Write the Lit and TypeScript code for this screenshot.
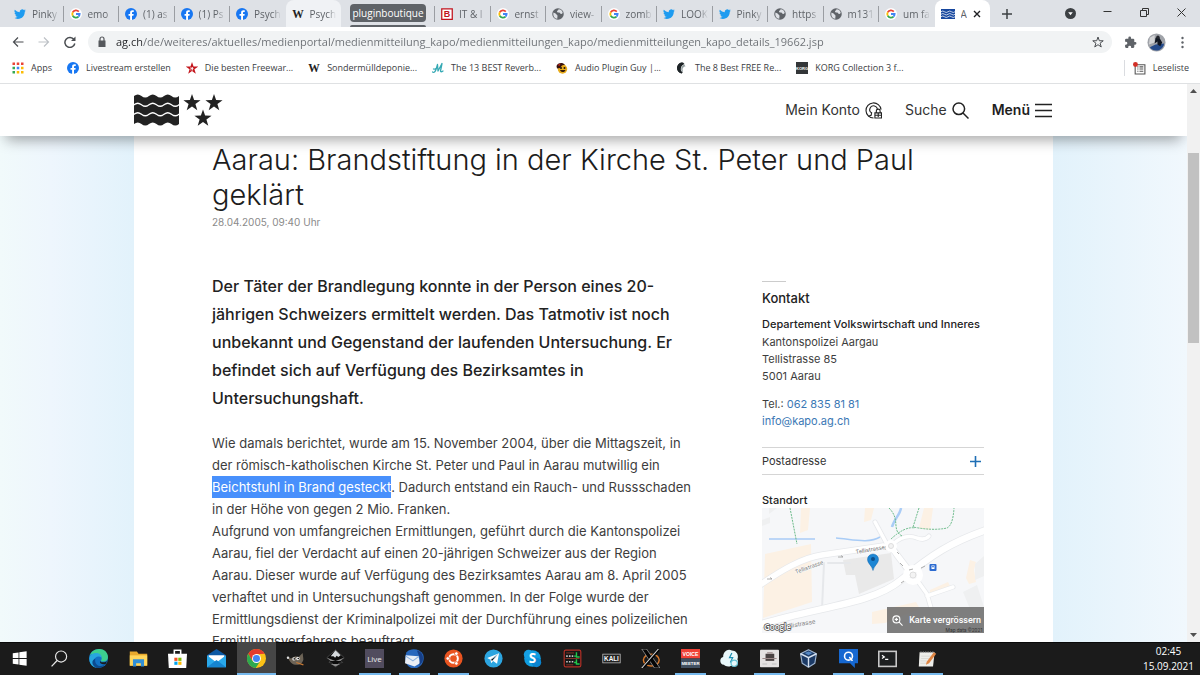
import { LitElement, html, css, svg, nothing, type TemplateResult } from "lit";
import { customElement } from "lit/decorators.js";
import { classMap } from "lit/directives/class-map.js";

const pic = (viewBox: string, body: TemplateResult) =>
  html`<svg class="pic" viewBox=${viewBox} aria-hidden="true">${body}</svg>`;

const starPoints = (cx: number, cy: number, r: number) =>
  Array.from({ length: 10 }, (_, i) => {
    const a = -Math.PI / 2 + (i * Math.PI) / 5;
    const d = i % 2 ? r * 0.4 : r;
    return `${(cx + d * Math.cos(a)).toFixed(2)},${(cy + d * Math.sin(a)).toFixed(2)}`;
  }).join(" ");

const wave = (y: number, h: number, w: number, step: number, amp: number) => {
  let d = `M0 ${y}`;
  const n = Math.round(w / step);
  for (let i = 0; i < n; i++) d += `q${step / 2} ${i % 2 ? amp : -amp} ${step} 0`;
  d += `v${h}`;
  for (let i = n - 1; i >= 0; i--) d += `q${-step / 2} ${i % 2 ? amp : -amp} ${-step} 0`;
  return d + "z";
};

const twitter = pic("0 0 24 24", svg`<path fill="#1d9bf0" d="M23.6 4.9a9.6 9.6 0 0 1-2.8.8 4.8 4.8 0 0 0 2.1-2.7 9.700 9.700 0 0 1-3.1 1.200 4.900 4.900 0 0 0-8.300 4.400A13.800 13.800 0 0 1 1.700 3.500a4.900 4.900 0 0 0 1.500 6.500 4.800 4.800 0 0 1-2.200-.6 4.900 4.900 0 0 0 3.900 4.800 4.900 4.900 0 0 1-2.200.1 4.900 4.900 0 0 0 4.500 3.400A9.800 9.800 0 0 1 0 19.700a13.800 13.800 0 0 0 7.500 2.200c9.100 0 14-7.500 14-14v-.6a9.900 9.900 0 0 0 2.100-2.400z"/>`);
const google = pic("0 0 24 24", svg`<circle cx="12" cy="12" r="12" fill="#fff"/><g fill="none" stroke-width="3.600"><path stroke="#ea4335" d="M17.600 7.200A7.500 7.500 0 0 0 5.500 8.500"/><path stroke="#fbbc05" d="M5.500 8.500a7.500 7.500 0 0 0 0 7"/><path stroke="#34a853" d="M5.500 15.500a7.500 7.500 0 0 0 11.500 1.800"/><path stroke="#4285f4" d="M12 12h7.300a7.500 7.500 0 0 1-2.300 5.300"/></g>`);
const facebook = pic("0 0 24 24", svg`<circle cx="12" cy="12" r="12" fill="#1877f2"/><path fill="#fff" d="M10.200 24v-8.500H7.100V12h3.100V9.400c0-3 1.800-4.700 4.600-4.700 1.300 0 2.700.2 2.700.2v3h-1.500c-1.500 0-2 .9-2 1.900V12h3.400l-.6 3.500H14V24z"/>`);
const wikipedia = pic("0 0 24 24", svg`<text x="12" y="20" text-anchor="middle" font-family="Liberation Serif, serif" font-weight="700" font-size="23" fill="#222">W</text>`);
const boxB = pic("0 0 24 24", svg`<path fill="#fff" stroke="#c1121c" stroke-width="2.500" d="M1.500 1.500h21v21h-21z"/><text x="12" y="18.500" text-anchor="middle" font-family="Liberation Sans, sans-serif" font-weight="700" font-size="18" fill="#c1121c">B</text>`);
const globe = pic("0 0 24 24", svg`<circle cx="12" cy="12" r="11.500" fill="#5f6368"/><path fill="#dee1e6" d="M3 9c3 2 4 1 5 3s3 1 3 4-1 4 0 5.500C6 21.500 2.500 17.500 2.500 12zM13 2.500c0 3-3 2-3 4.500s3 2 4.500 2 1.500 3 4 3 1.500-2 3-2C21 5.500 17.500 2.700 13 2.500z"/>`);
const aargau = pic("0 0 28 20", svg`<path fill="#17479e" d="M0 0h28v20H0z"/><path fill="none" stroke="#fff" stroke-width="1.500" d="M0 5.500q3.500-3 7 0t7 0 7 0 7 0M0 10.500q3.500-3 7 0t7 0 7 0 7 0M0 15.500q3.500-3 7 0t7 0 7 0 7 0"/>`);

interface Tab { icon: TemplateResult; title: string; state?: "hover" | "active" }
const leftTabs: Tab[] = [
  { icon: twitter, title: "Pinky" },
  { icon: google, title: "emo" },
  { icon: facebook, title: "(1) as" },
  { icon: facebook, title: "(1) Ps" },
  { icon: facebook, title: "Psych" },
  { icon: wikipedia, title: "Psych", state: "hover" },
];
const rightTabs: Tab[] = [
  { icon: boxB, title: "IT & I" },
  { icon: google, title: "ernst" },
  { icon: globe, title: "view-" },
  { icon: google, title: "zomb" },
  { icon: twitter, title: "LOOK" },
  { icon: twitter, title: "Pinky" },
  { icon: globe, title: "https" },
  { icon: globe, title: "m131" },
  { icon: google, title: "um fa" },
  { icon: aargau, title: "A", state: "active" },
];

const bookmarks = [
  { title: "Apps", icon: pic("0 0 24 24", svg`${[0, 1, 2].map((r) => [0, 1, 2].map((c) => svg`<rect x=${1 + c * 8.500} y=${1 + r * 8.500} width="5" height="5" fill=${["#ea4335", "#ea4335", "#ea4335", "#34a853", "#4285f4", "#fbbc05", "#34a853", "#fbbc05", "#fbbc05"][r * 3 + c]}/>`))}`) },
  { title: "Livestream erstellen", icon: facebook },
  { title: "Die besten Freewar...", icon: pic("0 0 24 24", svg`<polygon fill="#c4161c" points=${starPoints(12, 13, 13)}/><path stroke="#fff" stroke-width="1.500" d="M10 10v7M13 10v7M10 13h5"/>`) },
  { title: "Sondermülldeponie...", icon: wikipedia },
  { title: "The 13 BEST Reverb...", icon: pic("0 0 24 24", svg`<path fill="none" stroke="#35a9b4" stroke-width="2.600" stroke-linecap="round" stroke-linejoin="round" d="M1 20c5 3 7-4 10-15l1 13L20 3l-3 15c0 2 2 2 5 0M3 14c3 1 6-1 7-4"/>`) },
  { title: "Audio Plugin Guy |...", icon: pic("0 0 24 24", svg`<circle cx="13" cy="14" r="9.500" fill="#e8ac1b"/><path fill="#35110f" d="M1 8c2-7 12-8 17-3l-6 2-4 5-6 1z"/><path fill="#c3271b" d="M3 6l6-3-2 5z"/><circle cx="10" cy="12" r="2" fill="#201010"/><circle cx="17" cy="12" r="2" fill="#201010"/><path fill="#33190b" d="M8 16h11c-1 5-9 6-11 0z"/>`) },
  { title: "The 8 Best FREE Re...", icon: pic("0 0 24 24", svg`<path fill="#1e2427" d="M14 1A11 11 0 0 0 12 23c-4-5-4-16 5-19z"/><path fill="#1e2427" d="M12 1C0 2-1 20 11 23l3-3C6 17 7 8 15 4z"/><path fill="#98a3a5" d="M17 5c-7 2-8 9-5 15l2-2c-2-4 0-9 5-9z"/>`) },
  { title: "KORG Collection 3 f...", icon: pic("0 0 24 24", svg`<path fill="#333638" d="M0 0h24v24H0z"/><text x="12" y="15" text-anchor="middle" font-family="Liberation Sans, sans-serif" font-weight="700" font-size="8" fill="#fff">KORG</text>`) },
];

const disc = (fill: string, body: TemplateResult) => svg`<circle cx="12" cy="12" r="11.500" fill=${fill}/>${body}`;
interface App { name: string; icon: TemplateResult; open?: boolean; front?: boolean }
const apps: App[] = [
  { name: "Start", icon: svg`<path fill="#fff" d="M3.500 5.300l7.300-1v7.200H3.500zM11.800 4.200l9.200-1.300v8.600h-9.200zM3.500 12.500h7.300v7.200l-7.300-1zM11.800 12.500H21v8.600l-9.200-1.300z"/>` },
  { name: "Suche", icon: svg`<circle cx="14" cy="9.500" r="7" fill="none" stroke="#e8e8e8" stroke-width="1.500"/><path stroke="#e8e8e8" stroke-width="1.500" d="M9 14.500L2 22"/>` },
  { name: "Edge", icon: svg`<circle cx="12" cy="12" r="12" fill="#1272c4"/><path fill="#3ccf8e" d="M1 8C5-3 23-3 24 10c0 5-5 7-9 5 3-5-1-10-8-9-3 0-5 1-6 2z"/><path fill="#28a7de" d="M1 9c4-6 15-5 15 2-4-3-9-1-10 4-1 3 1 7 4 9C3 23-1 16 1 9z"/><path fill="#0c4b8f" d="M8 12c-2 9 7 12 13 7-4 5-9 6-13 4-5-3-5-9 0-11z"/><path fill="#1b1b1b" d="M14 15c2 3 7 2 9 0l-2 4c-4 1-8-1-7-4z"/>` },
  { name: "Explorer", icon: svg`<path fill="#e8a92c" d="M1 3h9l2 3h11v15H1z"/><path fill="#ffd65c" d="M1 8h22v13H1z"/><path fill="#318fd6" d="M5 13h14v9h-4v-4H9v4H5z"/>` },
  { name: "Store", icon: svg`<path fill="none" stroke="#fff" stroke-width="2" d="M8 7V1.500h8V7"/><path fill="#fff" d="M0 6h24l-1 18H1z"/><path fill="#f25022" d="M8 11h4v4H8z"/><path fill="#7fba00" d="M13 11h4v4h-4z"/><path fill="#00a4ef" d="M8 16h4v4H8z"/><path fill="#ffb900" d="M13 16h4v4h-4z"/>` },
  { name: "Mail", icon: svg`<path fill="#0c59a4" d="M0 8l12-8 12 8v5H0z"/><path fill="#fff" d="M2 8h20v6l-10 4L2 14z"/><path fill="#29a8ea" d="M0 8l12 9 12-9v15H0z"/><path fill="#1684cf" d="M0 23l12-9 12 9z"/>` },
  { name: "Chrome", front: true, icon: svg`<circle cx="12" cy="12" r="12" fill="#fbc116"/><path fill="#e33b2e" d="M1.600 6A12 12 0 0 1 22.400 6L12 6.600 6.800 15z"/><path fill="#2da94f" d="M1.600 6A12 12 0 0 0 11 24l5.800-9L12 17.400 6.800 15z"/><circle cx="12" cy="12" r="5.600" fill="#fff"/><circle cx="12" cy="12" r="4.400" fill="#4285f4"/>` },
  { name: "GIMP", icon: svg`<path fill="#6d6457" d="M2 9l4 3 6-3 4 1 5-5 1 8c-1 5-4 7-8 7-6 0-10-4-12-11z"/><circle cx="10" cy="12.500" r="2" fill="#eee"/><circle cx="15" cy="12" r="2.200" fill="#eee"/><circle cx="10.500" cy="12.500" r="1" fill="#111"/><circle cx="15.500" cy="12" r="1" fill="#111"/><circle cx="2.500" cy="11" r="1.500" fill="#ddd"/><path stroke="#c87a35" stroke-width="1.500" d="M13 17l9 3"/>` },
  { name: "Inkscape", icon: svg`<path fill="#0c0c0c" stroke="#666" stroke-width=".7" d="M12 1l11 10-5 3 3 3-5 1-4 5-4-5-4-1 2-3-5-3z"/><path fill="#d5d9dc" d="M12 1.500l6.500 6.500-3 2-2-1.500-2 2.500-2-2-3.500 0z"/><path fill="#8c8c8c" d="M1 11l11 4 11-4-5 4H6zM6 19h12l-6 3z"/>` },
  { name: "Live", open: true, icon: svg`<path fill="#514c5e" d="M0 0h24v24H0z"/><text x="12" y="16" text-anchor="middle" font-family="Open Sans, sans-serif" font-size="10" fill="#eee">Live</text>` },
  { name: "Thunderbird", open: true, icon: svg`<path fill="#2868bd" d="M2 4C8-2 19 0 23 7c2 7-1 14-8 17H8C-1 20-1 10 2 4z"/><path fill="#e9eef5" d="M1 8l16 1 2 9-7 4-12-4z"/><path fill="none" stroke="#8db1dc" stroke-width="1.500" d="M1 9l9 6 8-6"/><path fill="#173f87" d="M15 2c7 1 9 9 7 14l-4 5 1-9z"/>` },
  { name: "Ubuntu", open: true, icon: disc("#e95420", svg`<circle cx="12" cy="12" r="5.500" fill="none" stroke="#fff" stroke-width="2.500"/><g fill="#fff" stroke="#e95420"><circle cx="4.800" cy="12" r="2.300"/><circle cx="15.600" cy="5.800" r="2.300"/><circle cx="15.600" cy="18.200" r="2.300"/></g>`) },
  { name: "Telegram", icon: disc("#2ca5e0", svg`<path fill="#fff" d="M4 11.500L19 5.500l-2.500 13-5-3.500-2.500 3-.8-4.500z"/><path stroke="#a9cfe7" d="M8.500 13.500L17 7l-6.500 8"/>`) },
  { name: "Skype", icon: svg`<circle cx="12" cy="12" r="10.500" fill="#0f9de0"/><circle cx="7" cy="7" r="6" fill="#159fe3"/><circle cx="17" cy="17" r="6" fill="#0a84d0"/><text x="12" y="18" text-anchor="middle" font-family="Open Sans, sans-serif" font-weight="700" font-size="17" fill="#fff">S</text>` },
  { name: "Mixer", icon: svg`<rect x="1.500" y="1.500" width="21" height="21" rx="2" fill="#171717" stroke="#b33027" stroke-width="1.500"/><path stroke="#c8c8c8" stroke-width="2" stroke-dasharray="2 1.500" d="M4 9h10M4 16h10"/><path fill="none" stroke="#22c84b" stroke-width="1.800" d="M17 4v6h4M17 13v6h4M14 9h3M14 17h3"/><path stroke="#a03a2c" d="M4 5h10M3 12h18M4 20h9"/>` },
  { name: "KALI", icon: svg`<rect x="1" y="6.500" width="22" height="11" fill="#222" stroke="#bbb" stroke-width="1"/><text x="12" y="15" text-anchor="middle" font-family="Liberation Sans, sans-serif" font-weight="700" font-size="8" fill="#fff">KALI</text>` },
  { name: "XServer", icon: svg`<ellipse cx="13" cy="14" rx="10" ry="7.500" fill="none" stroke="#d8782a" stroke-width="1.800"/><path fill="#050505" stroke="#bbb" stroke-width=".8" d="M1 0h6l17 24h-7z"/><path stroke="#050505" stroke-width="4" d="M22 1L3 23"/><path stroke="#ddd" stroke-width="1.300" d="M22 0L1 24"/>` },
  { name: "Voicemeeter", open: true, icon: svg`<path fill="#ef4136" d="M0 0h24v12H0z"/><path fill="#415061" d="M0 12h24v12H0z"/><g font-family="Liberation Sans, sans-serif" font-weight="700" fill="#fff" text-anchor="middle" font-size="6.500"><text x="12" y="8.800">VOICE</text><text x="12" y="20.500" font-size="5.500">MEETER</text></g>` },
  { name: "Cloud", icon: svg`<path fill="#e9f8fb" d="M5 20C-1 19-1 11 4 10 4 3 10-1 15 2c6 0 9 6 7 11 3 6-3 11-8 8-3 2-7 1-9-1z"/><path fill="none" stroke="#198db0" stroke-width="1.500" d="M15 5l-3 6h4l-3 6"/><circle cx="18" cy="18" r="4" fill="none" stroke="#68c3d4" stroke-width="1.500"/>` },
  { name: "Chip", open: true, icon: svg`<rect x="0" y="1" width="24" height="22" rx="1" fill="#e4e2e2"/><rect x="7" y="6" width="11" height="9" fill="#4a4343"/><path stroke="#9b8a8a" stroke-width="1.500" d="M3 12h18M9 5h7"/><path stroke="#ccc" stroke-width="2" d="M3 19h6M15 19h6"/>` },
  { name: "VirtualBox", icon: svg`<path fill="#1c3a65" stroke="#9fb6d2" stroke-width="1.500" stroke-linejoin="round" d="M12 1l10 5-2 12-8 5-8-5L2 6z"/><path fill="none" stroke="#d6e1ef" stroke-width="1.800" d="M2 6l10 5 10-5M12 11v12"/><path fill="#5487c4" d="M7 5l5-2 5 2-5 3z"/>` },
  { name: "Quick Assist", open: true, icon: svg`<path fill="#1668d1" d="M0 0h24v18h-4v6l-6-6H0z"/><circle cx="12" cy="9" r="5" fill="none" stroke="#fff" stroke-width="2"/><path stroke="#fff" stroke-width="2" d="M13 10l4 5"/>` },
  { name: "Terminal", open: true, icon: svg`<rect x="1" y="3" width="22" height="19" fill="#1d1f20" stroke="#c8c8c8" stroke-width="2"/><path fill="none" stroke="#fff" stroke-width="1.500" d="M5 8l3 2-3 2M9 13h4"/>` },
  { name: "Editor", open: true, icon: svg`<path fill="#eeeeea" d="M2 4h19l-2 18H1z"/><path stroke="#d5d5d0" d="M4 9h12M4 12h10M3 15h8M3 18h8"/><path stroke="#999" stroke-width="2" stroke-dasharray="1.500 1.500" d="M3 4h18"/><path fill="#df8543" d="M20 4l3 2-9 12-4 2 1-4z"/>` },
];

@customElement("browser-chrome")
class BrowserChrome extends LitElement {
  static styles = css`
    :host { display: block; font-family: "Open Sans", sans-serif; color: #3c4043; }
    button { border: 0; padding: 0; background: none; font: inherit; color: inherit; display: grid; place-items: center; }
    a { color: inherit; text-decoration: none; }
    .strip { display: flex; height: 27px; background: #dee1e6; }
    .tabs { flex: 1; display: flex; padding-left: 8px; min-width: 0; }
    .tab { flex: 1 1 0; min-width: 0; display: flex; align-items: center; gap: 6px; padding: 0 2px 0 6px; font-size: 10px; color: #5f6368; box-sizing: border-box; position: relative; }
    .tab .pic { width: 12px; height: 12px; flex: none; }
    .label { flex: 1; text-align: left; overflow: hidden; white-space: nowrap; line-height: 16px; mask-image: linear-gradient(90deg, #000 60%, transparent 90%); }
    .sep::after, .group::after { content: ""; position: absolute; right: 0; top: 6px; width: 1px; height: 16px; background: #9a9da2; }
    .hover { background: #f0f2f5; border-radius: 8px 8px 0 0; }
    .active { background: #fff; border-radius: 8px 8px 0 0; }
    .active .pic { width: 14px; height: 10px; }
    .active .label { mask-image: none; flex: none; }
    .active .x { width: 8px; height: 8px; margin: 0 7px 0 auto; }
    .group { width: 94px; display: flex; flex-direction: column; justify-content: flex-end; align-items: center; position: relative; }
    .chip { background: #5f6368; color: #fff; border-radius: 4px; font-size: 10px; line-height: 18px; height: 18px; width: 76px; text-align: center; }
    .under { width: 76px; height: 2px; margin-top: 3px; background: #5f6368; border-radius: 2px 2px 0 0; }
    .controls { width: 210px; display: flex; align-items: center; justify-content: space-between; padding: 0 13px 0 10px; box-sizing: border-box; }
    .win { display: flex; align-items: center; gap: 26px; }
    .win .pic { width: 11px; height: 11px; }
    .win .arrow { width: 12px; height: 12px; }
    .plus .pic { width: 14px; height: 14px; }
    .bar { display: flex; align-items: center; height: 30px; background: #fff; padding: 0 11px 0 12px; }
    .nav { display: flex; gap: 14px; }
    .nav .pic { width: 12px; height: 12px; }
    .omni { flex: 1; display: flex; align-items: center; height: 22px; margin: 0 12px; padding: 0 8px; border-radius: 11px; background: #f1f3f4; gap: 8px; }
    .omni .pic { width: 12px; height: 12px; }
    .url { flex: 1; min-width: 0; border: 0; padding: 0; outline: 0; font: 11px/20px "Open Sans", sans-serif; color: transparent; background: linear-gradient(90deg, #202124 26px, #6a6e73 26px); -webkit-background-clip: text; background-clip: text; }
    .tools { display: flex; align-items: center; gap: 10px; }
    .tools .pic { width: 13px; height: 13px; }
    .tools .face .pic { width: 19px; height: 19px; }
    .marks { display: flex; align-items: center; justify-content: space-between; height: 27px; box-sizing: border-box; background: #fff; border-bottom: 1px solid #dfe1e3; padding: 0 11px 4px 12px; font-size: 9px; line-height: 16px; }
    .list { display: flex; gap: 15px; }
    .mark { display: flex; align-items: center; gap: 7px; white-space: nowrap; }
    .mark .pic { width: 12px; height: 12px; }
    .reading { display: flex; align-items: center; gap: 7px; border-left: 1px solid #dadce0; padding-left: 8px; }
    .reading .pic { width: 13px; height: 13px; }
  `;
  tab(t: Tab, next?: Tab) {
    const active = t.state === "active";
    return html`<button class=${classMap({ tab: true, active, hover: t.state === "hover", sep: !t.state && !next?.state })}>
      ${t.icon}<span class="label">${t.title}</span>
      ${active ? html`<svg class="x" viewBox="0 0 8 8"><path d="M1 1l6 6M7 1L1 7" stroke="#202124" stroke-width="1.400"/></svg>` : nothing}
    </button>`;
  }
  render() {
    return html`
      <div class="strip">
        <div class="tabs">
          ${leftTabs.map((t, i) => this.tab(t, leftTabs[i + 1]))}
          <div class="group"><button class="chip">pluginboutique</button><div class="under"></div></div>
          ${rightTabs.map((t, i) => this.tab(t, rightTabs[i + 1]))}
        </div>
        <div class="controls">
          <button class="plus" aria-label="Neuer Tab">${pic("0 0 14 14", svg`<path d="M7 2v10M2 7h10" stroke="#3c4043" stroke-width="1.500"/>`)}</button>
          <div class="win">
            <button class="arrow" aria-label="Tabs suchen">${pic("0 0 12 12", svg`<circle cx="6" cy="6" r="6" fill="#3c4043"/><path fill="#fff" d="M3.500 4.500h5L6 8z"/>`)}</button>
            <button aria-label="Minimieren">${pic("0 0 11 11", svg`<path d="M1.500 3.500h8" stroke="#333"/>`)}</button>
            <button aria-label="Verkleinern">${pic("0 0 11 11", svg`<path fill="none" stroke="#333" d="M1.500 2.500h6v6h-6zM3.500 2V.5h6v6H8"/>`)}</button>
            <button aria-label="Schliessen">${pic("0 0 11 11", svg`<path d="M1.500 .5l8 8M9.500 .5l-8 8" stroke="#333"/>`)}</button>
          </div>
        </div>
      </div>
      <div class="bar">
        <div class="nav">
          <button aria-label="Zurück">${pic("0 0 12 12", svg`<path fill="none" stroke="#4a4d51" stroke-width="1.200" d="M11.500 6H1.500M6 1.500L1.500 6 6 10.500"/>`)}</button>
          <button aria-label="Vorwärts">${pic("0 0 12 12", svg`<path fill="none" stroke="#bdc1c6" stroke-width="1.200" d="M.5 6h10M6 1.500L10.500 6 6 10.500"/>`)}</button>
          <button aria-label="Neu laden">${pic("0 0 12 12", svg`<path fill="none" stroke="#4a4d51" stroke-width="1.500" d="M10 3.500A5 5 0 1 0 10.800 7.500"/><path fill="#4a4d51" d="M11.500.5v4.500H7z"/>`)}</button>
        </div>
        <div class="omni">
          ${pic("0 0 12 12", svg`<path fill="#55585c" d="M2.500 4.500h7V11h-7z"/><path fill="none" stroke="#55585c" stroke-width="1.200" d="M4 5V3a2 2 0 0 1 4 0v2"/>`)}
          <input class="url" aria-label="Adresse" .value=${"ag.ch/de/weiteres/aktuelles/medienportal/medienmitteilung_kapo/medienmitteilungen_kapo/medienmitteilungen_kapo_details_19662.jsp"} />
          <button aria-label="Lesezeichen">${pic("0 0 24 24", svg`<polygon fill="none" stroke="#4a4d51" stroke-width="2" points=${starPoints(12, 13, 11)}/>`)}</button>
        </div>
        <div class="tools">
          <button aria-label="Erweiterungen">${pic("0 0 24 24", svg`<path fill="#5f6368" d="M20.500 11H19V7a2 2 0 0 0-2-2h-4V3.500a2.500 2.500 0 0 0-5 0V5H4a2 2 0 0 0-2 2v3.800h1.500a2.700 2.700 0 0 1 0 5.400H2V20c0 1.100.9 2 2 2h3.800v-1.500a2.700 2.700 0 0 1 5.400 0V22H17a2 2 0 0 0 2-2v-4h1.500a2.500 2.500 0 0 0 0-5z"/>`)}</button>
          <button class="face" aria-label="Profil">${pic("0 0 20 20", svg`<circle cx="10" cy="10" r="9.500" fill="#a0a3a9"/><path fill="#d3d4d6" d="M3 5l5-3v8l-6 2z"/><path fill="#244a8a" d="M3 15l6-3 9-1c-1 8-11 10-15 4z"/><path fill="#111722" d="M9 5l4 0 3 5-2 4-3-2 0-3-3 2z"/><circle cx="11.500" cy="4.500" r="1.800" fill="#22252b"/>`)}</button>
          <button aria-label="Menü">${pic("0 0 13 13", svg`<g fill="#5f6368"><circle cx="6.500" cy="2" r="1.200"/><circle cx="6.500" cy="6.500" r="1.200"/><circle cx="6.500" cy="11" r="1.200"/></g>`)}</button>
        </div>
      </div>
      <div class="marks">
        <div class="list">${bookmarks.map((b) => html`<a class="mark" href="#">${b.icon}<span>${b.title}</span></a>`)}</div>
        <button class="reading">${pic("0 0 24 24", svg`<path fill="none" stroke="#555" stroke-width="2" d="M4 5h18v17H4z"/><path stroke="#555" stroke-width="2" d="M8 9h2M12 9h7M8 13h2M12 13h7M8 17h2M12 17h7"/><circle cx="4.500" cy="4.500" r="4.500" fill="#d22f27"/>`)}<span>Leseliste</span></button>
      </div>`;
  }
}

@customElement("site-map")
class SiteMap extends LitElement {
  static styles = css`
    :host { display: block; position: relative; }
    .map { display: block; width: 100%; height: auto; }
    .zoom { position: absolute; right: 0; bottom: 0; display: flex; align-items: center; gap: 6px; height: 26px; padding: 0 3px 0 5px; border: 0; background: rgba(105, 105, 105, 0.85); color: #fff; font: 500 9px/14px Roboto, sans-serif; white-space: nowrap; }
    .zoom svg { width: 11px; height: 11px; }
    .credit { position: absolute; right: 1px; bottom: 0; font: 5px/6px Roboto, sans-serif; color: #333; }
  `;
  render() {
    return html`<svg class="map" viewBox="0 0 222 125" role="img" aria-label="Karte Tellistrasse 85">
        <path fill="#f6f7f9" d="M0 0h222v125H0z"/>
        <g fill="#fcf1e4"><path d="M3 46l46-10 1 58-49 16z"/><path d="M39 0h9l-2 22-8 3z"/><path d="M103 0h9l-3 12-7 2z"/><path d="M162 0h9l-3 22-11-2z"/><path d="M208 52l6 2-2 8 2 12-7 2-3-6z"/><path d="M110 104l44-10 4 7-35 14-13 1z"/><path d="M168 82l18-8 2 4-20 8z"/></g>
        <g fill="#eff0f1"><path d="M7 6l8-6h-8z"/><path d="M0 12l8-3v6l-8 3z"/><path d="M201 84l14-7 7 22-14 2z"/><path d="M213 56l9-8v20l-9 4z"/></g>
        <path fill="#e9e9e9" d="M81 52l48-7 3 26-35 15-4-19-9 0z"/>
        <g fill="none" stroke="#e6e8eb" stroke-linecap="round">
          <path stroke-width="8" d="M-4 118L0 116C60 98 110 96 139 72c30-25 50-38 88-51"/>
          <path stroke-width="7" d="M-2 77C20 62 40 50 60 47l61-9q9 0 14 9l13 17"/>
          <path stroke-width="5" d="M113 14l14 26M131 36q12-11 24-6 8 3 12-2M155 72l10 14 4 14M165 88l26-9"/>
          <path stroke-width="2" d="M62 55l-2 46M66 55h22"/>
        </g>
        <g fill="none" stroke="#fff" stroke-linecap="round">
          <path stroke-width="6.500" d="M-4 118L0 116C60 98 110 96 139 72c30-25 50-38 88-51"/>
          <path stroke-width="5.500" d="M-2 77C20 62 40 50 60 47l61-9q9 0 14 9l13 17"/>
          <path stroke-width="3.500" d="M113 14l14 26M131 36q12-11 24-6 8 3 12-2M155 72l10 14 4 14M165 88l26-9"/>
          <circle cx="151" cy="67" r="7" stroke-width="6"/><circle cx="129" cy="38" r="4" stroke-width="4"/>
        </g>
        <circle cx="151" cy="67" r="3" fill="#f3f3f3" stroke="#dedede"/><circle cx="129" cy="38" r="2.500" fill="#f3f3f3" stroke="#dedede"/>
        <g fill="none" stroke="#a9ccf6" stroke-width="1.500"><path d="M7 31h46M74 30c15 1 33 6 44-1"/><path stroke-width="2.500" d="M139 0c-1 7-7 11-9 19"/></g>
        <g fill="none" stroke="#69ba88" stroke-width="1" stroke-dasharray="2 1"><path d="M28 0l7 36M127 0c12 12 2 22 13 28M157 0l-6 19q20 4 34 1 6-3 7-20M129 31q14-13 24-11"/></g>
        <g fill="none" stroke="#999" stroke-width="0.800"><path d="M5 71h5l-2-1.500M76 49h5l-2-1.500M147 62l4-1M159 60l4-2M138 55l3 3M139 75l3-2M135 44l2 2M123 38v4"/></g>
        <g font-family="Roboto, sans-serif" font-size="5.800" fill="#777" stroke="#fff" stroke-width="1" paint-order="stroke"><text transform="translate(34 66) rotate(-20)">Tellistrasse</text><text transform="translate(94 46) rotate(-10)">Tellistrasse</text></g>
        <text transform="translate(28 120) rotate(-10)" font-family="Roboto, sans-serif" font-size="6.500" fill="#888">llistrasse</text>
        <rect x="167.500" y="56" width="7" height="7" rx="1" fill="#2c6bd0"/><path fill="#fff" d="M169.500 57.500h3v3.500h-3z"/><path fill="#2c6bd0" d="M170 58.200h2v1h-2z"/>
        <path fill="#1d86d4" stroke="#1568ae" stroke-width="0.500" d="M111 62.500c-1-5-5.500-7-5.500-11a5.500 5.500 0 0 1 11 0c0 4-4.500 6-5.500 11z"/><circle cx="111" cy="51" r="2" fill="#0d4f8a"/>
        <text x="2" y="122" font-family="Open Sans, sans-serif" font-weight="600" font-size="8" fill="#fff" stroke="#555" stroke-width="1.500" paint-order="stroke">Google</text>
      </svg>
      <button class="zoom"><svg viewBox="0 0 12 12"><g fill="none" stroke="#fff" stroke-width="1.200"><circle cx="4.800" cy="4.800" r="3.800"/><path d="M7.600 7.600L11.500 11.500M3 4.800h3.600M4.800 3v3.600"/></g></svg>Karte vergrössern</button>
      <span class="credit">Map data ©2021</span>`;
  }
}

@customElement("news-page")
class NewsPage extends LitElement {
  static styles = css`
    :host { display: flex; min-height: 0; overflow: hidden; font-family: Inter, sans-serif; color: #3d3d3d; }
    .view { flex: 1; min-width: 0; display: flex; flex-direction: column; overflow: hidden; background: linear-gradient(90deg, #f1fafb 0, #eef6fd 50px, #e2f2fb 134px, #e2f2fb calc(100% - 134px), #f1f8fd 100%); }
    .head { position: relative; z-index: 1; flex: none; background: #fff; box-shadow: 0 10px 14px -6px rgba(0, 0, 0, 0.35); }
    .inner { max-width: 919px; height: 52px; margin: 0 auto; display: flex; justify-content: space-between; align-items: center; }
    .logo { display: block; width: 90px; height: 34px; }
    .menu { display: flex; gap: 23px; padding-right: 1px; font-weight: 400; font-size: 14px; line-height: 20px; }
    .item { display: flex; align-items: center; gap: 5px; border: 0; padding: 0; background: none; font: inherit; color: #333; text-decoration: none; white-space: nowrap; }
    .item svg { width: 17px; height: 17px; }
    .strong { font-weight: 600; color: #1f1f1f; }
    .sheet { flex: 1; width: 100%; max-width: 919px; min-height: 0; margin: 0 auto; box-sizing: border-box; background: #fff; padding: 6px 69px 0 78px; overflow: hidden; }
    h1 { margin: 0; font-weight: 300; font-size: 29px; line-height: 35px; color: #1c1c1c; white-space: nowrap; }
    .date { margin: 2px 0 0; font-size: 10px; line-height: 16px; color: #8a8a8a; }
    .cols { display: grid; grid-template-columns: minmax(0, 1fr) 222px; column-gap: 50px; padding-top: 42px; align-items: start; }
    .lead { margin: 0 0 20px; font-weight: 500; font-size: 16px; line-height: 28px; color: #222; white-space: nowrap; }
    .text { margin: 0; font-size: 13px; line-height: 22px; white-space: nowrap; }
    .sel { background: #4890fc; color: #fff; display: inline-block; }
    aside { font-size: 11px; line-height: 17px; margin-top: 9px; }
    .dash { width: 24px; height: 1px; background: #ccc; }
    h2 { margin: 7px 0 8px; font-weight: 500; font-size: 13px; line-height: 18px; color: #222; }
    .dept { display: block; font-weight: 500; line-height: 19px; color: #222; white-space: nowrap; }
    address { font-style: normal; }
    .phone { margin: 11px 0 17px; }
    .link { color: #3b78b5; text-decoration: none; }
    .post { display: flex; justify-content: space-between; align-items: center; width: 100%; height: 28px; padding: 0 3px 0 0; border: 0; border-top: 1px solid #d5d5d5; border-bottom: 1px solid #d5d5d5; background: none; font: inherit; color: #333; }
    .post svg { width: 11px; height: 11px; }
    h3 { margin: 17px 0 0; font-weight: 500; font-size: 11px; line-height: 16px; color: #222; }
    .rail { width: 13px; background: #f1f1f1; display: flex; flex-direction: column; align-items: center; }
    .rail svg { width: 7px; height: 14px; flex: none; }
    .track { flex: 1; width: 11px; padding-top: 55px; }
    .thumb { height: 40%; background: #c1c1c1; }
  `;
  render() {
    return html`<div class="view">
        <header class="head"><div class="inner">
          <a href="#" aria-label="Kanton Aargau"><svg class="logo" viewBox="0 0 90 34"><g fill="#222">
            <path d=${wave(3, 8, 45, 7.500, 3)}/><path d=${wave(12.500, 8, 45, 7.500, 3)}/><path d=${wave(22, 9, 45, 7.500, 3)}/>
            <polygon points=${starPoints(58, 10, 9)}/><polygon points=${starPoints(80, 10, 9)}/><polygon points=${starPoints(69, 25.500, 9)}/>
          </g></svg></a>
          <nav class="menu">
            <a class="item" href="#">Mein Konto<svg viewBox="0 0 18 18"><g fill="none" stroke="#222" stroke-width="1.200"><path d="M17 8A8 8 0 1 0 9 17"/><path d="M13 8.500a4 4 0 1 0-6 3l-.5 2.500-3 1"/><path d="M10.500 11.500h7v5.500h-7zM12 11V9.500a2 2 0 0 1 4 0V11M14 12v4M11 14h6"/></g></svg></a>
            <button class="item">Suche<svg viewBox="0 0 17 17"><g fill="none" stroke="#222" stroke-width="1.500"><circle cx="6.800" cy="6.800" r="5.800"/><path d="M11 11l5.500 5.500"/></g></svg></button>
            <button class="item strong">Menü<svg viewBox="0 0 17 17"><path stroke="#222" stroke-width="1.500" d="M0 2.500h17M0 8.500h17M0 14.500h17"/></svg></button>
          </nav>
        </div></header>
        <main class="sheet">
          <h1>Aarau: Brandstiftung in der Kirche St. Peter und Paul<br>geklärt</h1>
          <p class="date">28.04.2005, 09:40 Uhr</p>
          <div class="cols">
            <article>
              <p class="lead">Der Täter der Brandlegung konnte in der Person eines 20-<br>jährigen Schweizers ermittelt werden. Das Tatmotiv ist noch<br>unbekannt und Gegenstand der laufenden Untersuchung. Er<br>befindet sich auf Verfügung des Bezirksamtes in<br>Untersuchungshaft.</p>
              <p class="text">Wie damals berichtet, wurde am 15. November 2004, über die Mittagszeit, in<br>der römisch-katholischen Kirche St. Peter und Paul in Aarau mutwillig ein<br><span class="sel">Beichtstuhl in Brand gesteckt</span>. Dadurch entstand ein Rauch- und Russschaden<br>in der Höhe von gegen 2 Mio. Franken.<br>Aufgrund von umfangreichen Ermittlungen, geführt durch die Kantonspolizei<br>Aarau, fiel der Verdacht auf einen 20-jährigen Schweizer aus der Region<br>Aarau. Dieser wurde auf Verfügung des Bezirksamtes Aarau am 8. April 2005<br>verhaftet und in Untersuchungshaft genommen. In der Folge wurde der<br>Ermittlungsdienst der Kriminalpolizei mit der Durchführung eines polizeilichen<br>Ermittlungsverfahrens beauftragt.</p>
            </article>
            <aside>
              <div class="dash"></div>
              <h2>Kontakt</h2>
              <address><strong class="dept">Departement Volkswirtschaft und Inneres</strong>Kantonspolizei Aargau<br>Tellistrasse 85<br>5001 Aarau
                <div class="phone">Tel.: <a class="link" href="#">062 835 81 81</a><br><a class="link" href="#">info@kapo.ag.ch</a></div>
              </address>
              <button class="post">Postadresse<svg viewBox="0 0 11 11"><path stroke="#1f6fb5" stroke-width="1.600" d="M5.500 0v11M0 5.500h11"/></svg></button>
              <h3>Standort</h3>
              <site-map></site-map>
            </aside>
          </div>
        </main>
      </div>
      <div class="rail" aria-hidden="true">
        <svg viewBox="0 0 7 14"><path fill="#505050" d="M0 9l3.500-4L7 9z"/></svg>
        <div class="track"><div class="thumb"></div></div>
        <svg viewBox="0 0 7 14"><path fill="#505050" d="M0 5l3.500 4L7 5z"/></svg>
      </div>`;
  }
}

@customElement("task-bar")
class TaskBar extends LitElement {
  static styles = css`
    :host { display: flex; height: 33px; background: #1b1b1b; color: #fff; font-family: "Open Sans", sans-serif; box-shadow: inset 0 1px #0a0a0a; }
    .apps { flex: 1; min-width: 0; display: flex; }
    .app { flex: 1 1 0; min-width: 0; display: grid; place-items: center; border: 0; padding: 0; background: none; position: relative; }
    .app svg { width: 19px; height: 19px; }
    .open::after { content: ""; position: absolute; left: 4px; right: 4px; bottom: 0; height: 2px; background: #76b9ed; }
    .front { background: #464646; }
    .front::after { content: ""; position: absolute; left: 0; right: 0; bottom: 0; height: 2px; background: #76b9ed; }
    .tray { width: 253px; box-sizing: border-box; padding: 1px 6px 0 0; display: flex; justify-content: flex-end; align-items: center; }
    .clock { text-align: center; font-size: 10px; line-height: 15px; }
  `;
  render() {
    return html`<div class="apps">${apps.map((a) => html`<button class=${classMap({ app: true, open: !!a.open, front: !!a.front })} aria-label=${a.name}><svg viewBox="0 0 24 24">${a.icon}</svg></button>`)}</div>
      <div class="tray"><div class="clock">02:45<br>15.09.2021</div></div>`;
  }
}

@customElement("app-root")
class AppRoot extends LitElement {
  static styles = css`
    :host { display: flex; flex-direction: column; height: 100vh; overflow: hidden; }
    browser-chrome, task-bar { flex: none; }
    news-page { flex: 1; }
  `;
  render() {
    return html`<browser-chrome></browser-chrome><news-page></news-page><task-bar></task-bar>`;
  }
}
